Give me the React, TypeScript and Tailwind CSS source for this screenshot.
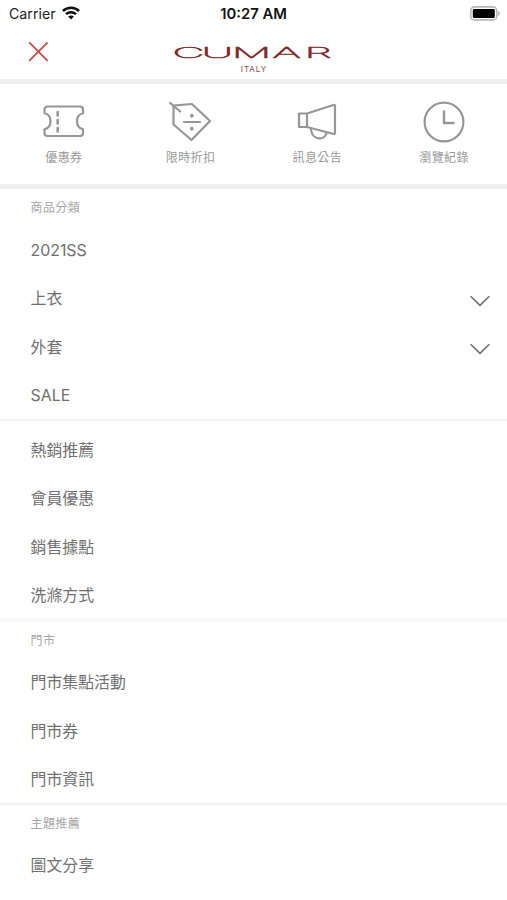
import React from "react";

const FONT = "font-['Inter','Noto_Sans_CJK_TC',sans-serif]";

function Row({ label, expandable = false }: { label: string; expandable?: boolean }) {
  return (
    <li className="flex h-[48.5px] items-center justify-between pl-[30.5px] pr-[17px] text-[15.9px] leading-6 text-[#707070]">
      <span>{label}</span>
      {expandable && (
        <svg className="mt-[3px]" width="20" height="12" viewBox="0 0 20 12" fill="none" stroke="#707070" strokeWidth="1.6">
          <path d="M.7 1.2 10 10.4 19.3 1.2" />
        </svg>
      )}
    </li>
  );
}

function Heading({ children }: { children: React.ReactNode }) {
  return <h2 className="h-[37.5px] pl-[30.5px] pt-[10px] text-[12px] leading-[18px] tracking-[0.4px] text-[#a6a6a6]">{children}</h2>;
}

function Shortcut({ label, children }: { label: string; children: React.ReactNode }) {
  return (
    <button className="flex flex-1 flex-col items-center pl-[1px] pt-[16px]">
      <svg width="44" height="44" viewBox="0 0 44 44" fill="none" stroke="#969696" strokeWidth="2.2" strokeLinecap="round" strokeLinejoin="round">
        {children}
      </svg>
      <span className="mt-[5px] text-[12px] leading-[18px] tracking-[0.4px] text-[#989898]">{label}</span>
    </button>
  );
}

export default function App() {
  return (
    <div className={`h-[900px] w-full overflow-hidden bg-white ${FONT}`}>
      <div className="grid h-7 grid-cols-3 items-center pl-[9px] pr-[7px] text-[#222]">
        <div className="flex items-center gap-[6px] text-[14.2px] leading-5">
          <span>Carrier</span>
          <svg className="-mt-[2px]" width="18" height="14" viewBox="0 0 18 14" fill="none" stroke="#111" strokeWidth="2.5">
            <path d="M.9 5C5.4.5 12.6.5 17.1 5" />
            <path d="M4 8.2c2.8-2.7 7.2-2.7 10 0" />
            <path d="m9 13.5-2.9-3c1.6-1.5 4.2-1.5 5.8 0z" fill="#111" stroke="none" />
          </svg>
        </div>
        <div className="-mx-2 pr-[2px] text-center text-[14.8px] font-semibold leading-5 text-[#111]">10:27 AM</div>
        <svg className="-mt-[2px] justify-self-end" width="31" height="15" viewBox="0 0 31 15">
          <rect x="1.8" y=".9" width="26" height="13" rx="3.7" fill="#fff" stroke="#b8b8b8" strokeWidth="1.6" />
          <rect x="3.8" y="2.9" width="22" height="9" rx="1.2" fill="#000" />
          <path d="M29.2 5v5c2-1 2-4 0-5" fill="#aaa" />
        </svg>
      </div>

      <header className="grid h-[51px] grid-cols-3">
        <button className="ml-[28px] mt-[13px] h-[21px] w-[21px]" aria-label="Close">
          <svg width="21" height="21" viewBox="0 0 21 21" fill="none" stroke="#c94f48" strokeWidth="1.9">
            <path d="m1.2 1.4 18.4 18.4M19.6 1.4 1.2 19.8" />
          </svg>
        </button>
        <div className="flex flex-col items-center pt-[18px]">
          <svg width="160" height="15" viewBox="0 0 160 15" className="overflow-visible">
            <text
              transform="scale(2.95 1)"
              x="-0.5 9.3 19.6 33.4 44.2"
              y="12.2"
              fontSize="15"
              fill="#832a2c"
              stroke="#832a2c"
              strokeWidth="1.5"
              vectorEffect="non-scaling-stroke"
              className="font-['Inter'] font-thin"
            >
              CUMAR
            </text>
          </svg>
          <span className="mt-[3px] pl-[1px] text-[8px] leading-[10px] tracking-[0.9px] text-[#8f4548]">ITALY</span>
        </div>
      </header>

      <nav className="flex h-[110px] border-y-[5px] border-[#efefef]">
        <Shortcut label="優惠券">
          <path d="M5 6.5H38a3 3 0 0 1 3 3v3.8c-8 1.8-8 14 0 16V33a3 3 0 0 1-3 3H5.5a3 3 0 0 1-3-3v-3.7c8-2 8-14.200 0-16V9.500a3 3 0 0 1 3-3z" />
          <path d="M15.700 12v3.500m0 4.500v3.500m0 4.500v3.500" strokeWidth="2.600" />
        </Shortcut>
        <Shortcut label="限時折扣">
          <path d="M4.500 5.500 23 4 41 21 22.500 40 4.500 24.500zM1.200 3l10 8.500M15 22h16" />
          <path d="M22.800 15.500v.4m0 12.600v.4" strokeWidth="3.600" />
        </Shortcut>
        <Shortcut label="訊息公告">
          <path d="M4 13.500h8L38.500 5a1 1 0 0 1 1.500 1v27a1 1 0 0 1-1.300 1L12 27H4zM12 13.500V27M16 29c.5 11.500 14 12 15.500 4" />
        </Shortcut>
        <Shortcut label="瀏覽紀錄">
          <circle cx="22" cy="22" r="19.400" />
          <path d="M22 11.500V23h9.500" strokeWidth="2.400" />
        </Shortcut>
      </nav>

      <section className="h-[232px] border-b-2 border-[#f3f3f3]">
        <Heading>商品分類</Heading>
        <ul>
          <Row label="2021SS" />
          <Row label="上衣" expandable />
          <Row label="外套" expandable />
          <Row label="SALE" />
        </ul>
      </section>
      <section className="h-[201px] border-b-4 border-[#f7f7f7] pt-[5.3px]">
        <ul>
          <Row label="熱銷推薦" />
          <Row label="會員優惠" />
          <Row label="銷售據點" />
          <Row label="洗滌方式" />
        </ul>
      </section>
      <section className="h-[183px] border-b-2 border-[#f5f5f5]">
        <div className="-mt-[0.5px]">
          <Heading>門市</Heading>
          <ul>
            <Row label="門市集點活動" />
            <Row label="門市券" />
            <Row label="門市資訊" />
          </ul>
        </div>
      </section>
      <section>
        <Heading>主題推薦</Heading>
        <ul>
          <Row label="圖文分享" />
        </ul>
      </section>
    </div>
  );
}
